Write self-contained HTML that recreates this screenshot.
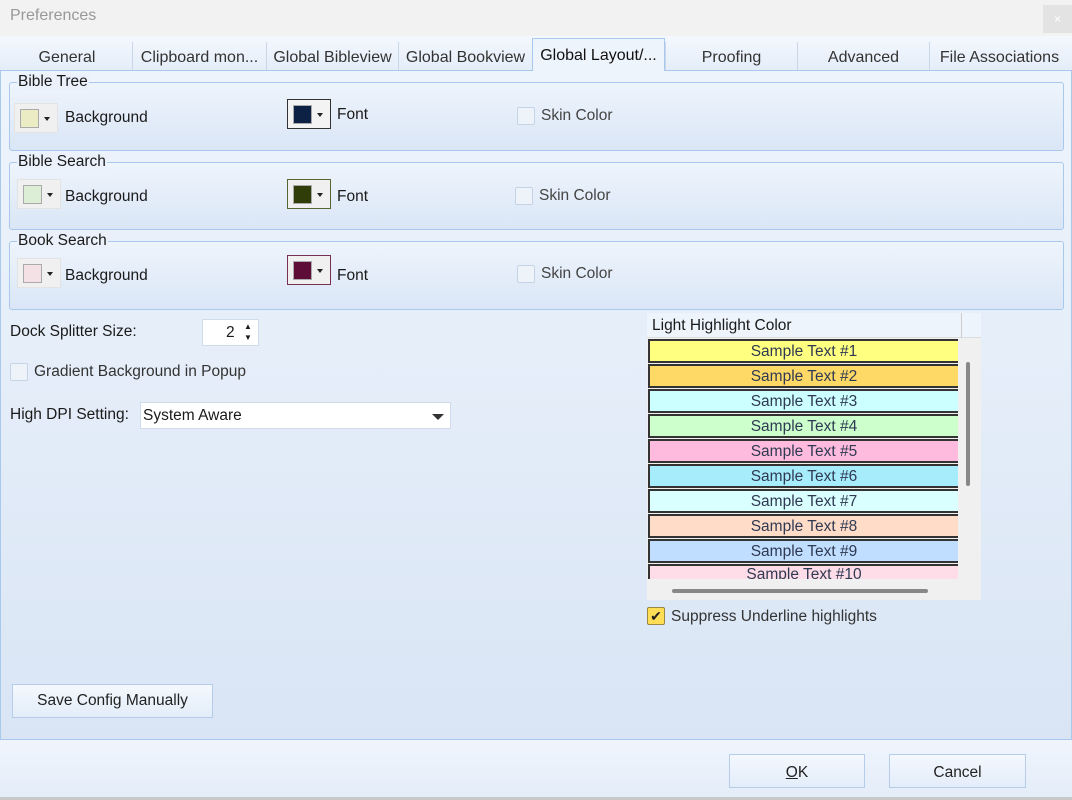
<!DOCTYPE html>
<html><head><meta charset="utf-8"><style>
*{box-sizing:border-box;margin:0;padding:0}
body{width:1072px;height:800px;position:relative;overflow:hidden;font-family:"Liberation Sans",sans-serif;font-size:15.5px;color:#1a1a1a;background:#f2f2f2}
.a{position:absolute}
.tab{position:absolute;top:42px;height:28px;text-align:center;line-height:32px;font-size:16px;color:#333;border-left:1px solid #c9d6e6}
.grp{position:absolute;left:9px;width:1055px;border:1px solid #a9c8ee;border-radius:3px;background:linear-gradient(#eef4fc,#dae6f6)}
.gt{position:absolute;left:7px;top:-9px;background:#eaf1fb;padding:0 1px;line-height:16px}
.sw{position:absolute;width:44px;height:30px;border:1px solid #e3e3e3;background:#f0f0f0}
.sw i{position:absolute;left:5px;top:5px;width:19px;height:19px;border:1px solid #aaa}
.sw b{position:absolute;left:29px;top:13px;border-left:3.5px solid transparent;border-right:3.5px solid transparent;border-top:4px solid #222}
.cb{position:absolute;width:18px;height:18px;border:1px solid #c4d3e6;background:#eef3fa;border-radius:2px}
.row{position:absolute;left:648px;width:310px;height:24px;border:2px solid #333;border-right:none;text-align:center;line-height:21px;color:#2f3a52;font-size:15.5px}
.btn{position:absolute;height:34px;border:1px solid #b6cde9;background:linear-gradient(#f4f8fe,#e3edf9);text-align:center;line-height:32px;color:#222}
</style></head><body>
<div class="a" style="left:10px;top:7px;color:#999;font-size:16px">Preferences</div>
<div class="a" style="left:1043px;top:5px;width:29px;height:28px;background:#e3e3e3;color:#fff;text-align:center;line-height:28px;font-size:12px">×</div>
<div class="a" style="left:0;top:36px;width:1072px;height:764px;background:linear-gradient(#eef4fc,#d9e5f5 90%)"></div>
<div class="a" style="left:0;top:36px;width:1072px;height:34px;background:linear-gradient(#f4f8fe,#e4edf9)"></div>
<div class="tab" style="left:2px;width:130px;border-left:none">General</div>
<div class="tab" style="left:132px;width:134px">Clipboard mon...</div>
<div class="tab" style="left:266px;width:132px">Global Bibleview</div>
<div class="tab" style="left:398px;width:134px">Global Bookview</div>
<div class="tab" style="left:532px;top:38px;height:33px;width:133px;background:#eef4fc;border:1px solid #a9c8ee;border-bottom:none;line-height:34px;color:#111;z-index:2">Global Layout/...</div>
<div class="tab" style="left:665px;width:132px">Proofing</div>
<div class="tab" style="left:797px;width:132px">Advanced</div>
<div class="tab" style="left:929px;width:140px">File Associations</div>
<div class="a" style="left:0;top:70px;width:1072px;height:670px;border:1px solid #a9c8ee;background:linear-gradient(#eef4fc,#d9e5f5)"></div>

<div class="grp" style="top:82px;height:69px"><span class="gt">Bible Tree</span></div>
<div class="sw" style="left:14px;top:103px"><i style="background:#ececc4"></i><b></b></div>
<div class="a" style="left:65px;top:109px">Background</div>
<div class="sw" style="left:287px;top:99px;border:1px solid #333;background:#f3f3f3"><i style="background:#0d2145"></i><b></b></div>
<div class="a" style="left:337px;top:106px">Font</div>
<div class="cb" style="left:517px;top:107px"></div>
<div class="a" style="left:541px;top:107px;color:#444">Skin Color</div>

<div class="grp" style="top:162px;height:68px"><span class="gt">Bible Search</span></div>
<div class="sw" style="left:17px;top:179px"><i style="background:#dcefd6"></i><b></b></div>
<div class="a" style="left:65px;top:188px">Background</div>
<div class="sw" style="left:287px;top:179px;border:1px solid #556633"><i style="background:#303d08"></i><b></b></div>
<div class="a" style="left:337px;top:188px">Font</div>
<div class="cb" style="left:515px;top:187px"></div>
<div class="a" style="left:539px;top:187px;color:#444">Skin Color</div>

<div class="grp" style="top:241px;height:69px"><span class="gt">Book Search</span></div>
<div class="sw" style="left:17px;top:258px"><i style="background:#f3e1e6"></i><b></b></div>
<div class="a" style="left:65px;top:267px">Background</div>
<div class="sw" style="left:287px;top:255px;border:1px solid #7a3050"><i style="background:#5e0d38"></i><b></b></div>
<div class="a" style="left:337px;top:267px">Font</div>
<div class="cb" style="left:517px;top:265px"></div>
<div class="a" style="left:541px;top:265px;color:#444">Skin Color</div>

<div class="a" style="left:10px;top:323px">Dock Splitter Size:</div>
<div class="a" style="left:202px;top:319px;width:57px;height:27px;background:#fff;border:1px solid #cfdcec"><span class="a" style="left:23px;top:4px">2</span><span class="a" style="left:41px;top:2px;font-size:8px">▲</span><span class="a" style="left:41px;top:13px;font-size:8px">▼</span></div>
<div class="cb" style="left:10px;top:363px"></div>
<div class="a" style="left:34px;top:363px;color:#333">Gradient Background in Popup</div>
<div class="a" style="left:10px;top:406px">High DPI Setting:</div>
<div class="a" style="left:140px;top:402px;width:311px;height:27px;background:#fff;border:1px solid #cfdcec"><span class="a" style="left:2px;top:4px">System Aware</span><span class="a" style="left:291px;top:11px;border-left:6px solid transparent;border-right:6px solid transparent;border-top:6px solid #333"></span></div>

<div class="a" style="left:647px;top:313px;width:334px;height:287px;background:#f0f0f0"></div>
<div class="a" style="left:647px;top:313px;width:334px;height:25px;background:#eef4fc;border-bottom:1px solid #ddd"><span class="a" style="left:5px;top:4px">Light Highlight Color</span><span class="a" style="left:314px;top:0;height:25px;border-left:1px solid #ccc"></span></div>
<div class="row" style="top:339px;background:#ffff80">Sample Text #1</div>
<div class="row" style="top:364px;background:#ffd966">Sample Text #2</div>
<div class="row" style="top:389px;background:#ccffff">Sample Text #3</div>
<div class="row" style="top:414px;background:#ccffcc">Sample Text #4</div>
<div class="row" style="top:439px;background:#ffbbdd">Sample Text #5</div>
<div class="row" style="top:464px;background:#a6ecfb">Sample Text #6</div>
<div class="row" style="top:489px;background:#daffff">Sample Text #7</div>
<div class="row" style="top:514px;background:#ffdcc8">Sample Text #8</div>
<div class="row" style="top:539px;background:#c0deff">Sample Text #9</div>
<div class="a" style="left:648px;top:564px;width:310px;height:15px;overflow:hidden"><div class="row" style="left:0;top:0;background:#ffdde8;line-height:18px">Sample Text #10</div></div>
<div class="a" style="left:966px;top:362px;width:4px;height:124px;background:#888;border-radius:2px"></div>
<div class="a" style="left:672px;top:589px;width:256px;height:4px;background:#888;border-radius:2px"></div>
<div class="a" style="left:647px;top:607px;width:18px;height:18px;background:#ffdd55;border:1px solid #9a8a40;border-radius:2px;color:#222;font-size:14px;line-height:16px;text-align:center">✔</div>
<div class="a" style="left:671px;top:608px;color:#333">Suppress Underline highlights</div>

<div class="btn" style="left:12px;top:684px;width:201px;font-size:15.5px">Save Config Manually</div>
<div class="a" style="left:0;top:739px;width:1072px;height:61px;background:linear-gradient(#f0f5fd,#e3ecf8);border-top:1px solid #a9c8ee"></div>
<div class="btn" style="left:729px;top:754px;width:136px;line-height:36px"><u>O</u>K</div>
<div class="btn" style="left:889px;top:754px;width:137px;line-height:36px">Cancel</div>
<div class="a" style="left:0;top:797px;width:1072px;height:3px;background:#c8c8c8"></div>
</body></html>
